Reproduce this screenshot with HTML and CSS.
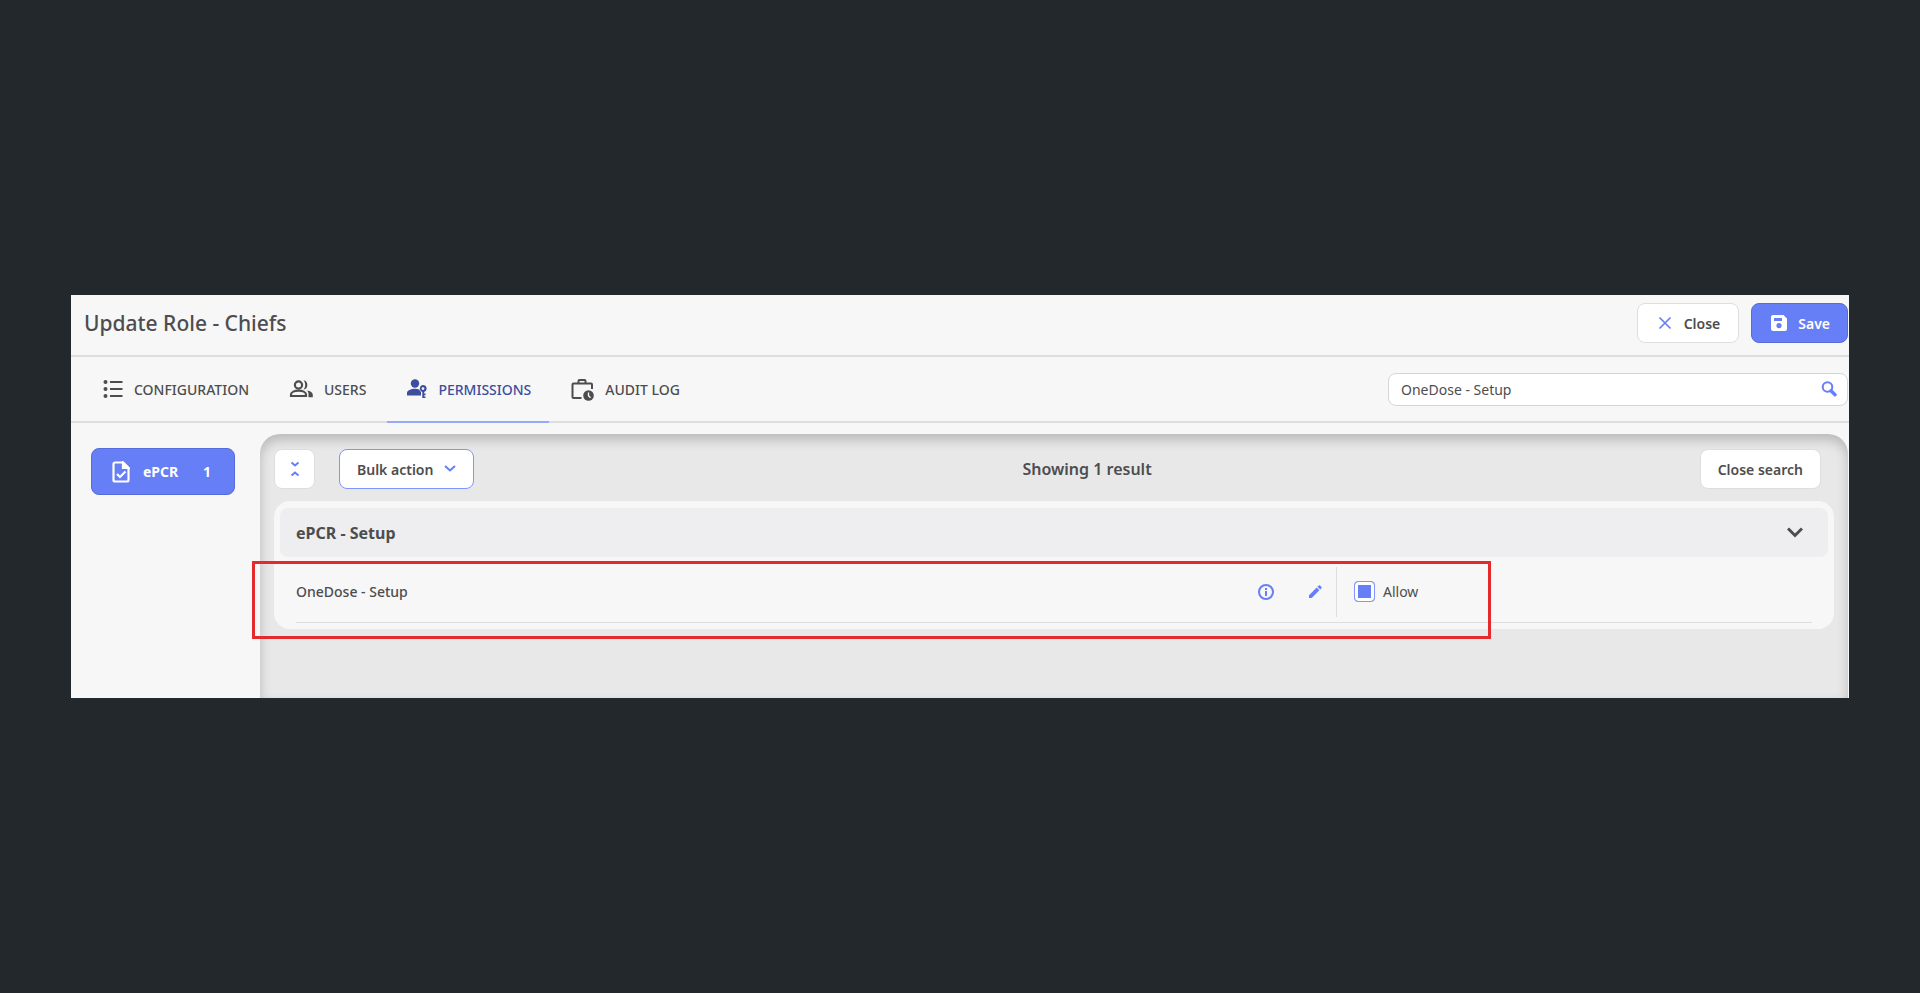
FILE: index.html
```
<!DOCTYPE html>
<html lang="en">

<head>
    <meta charset="UTF-8">
    <meta name="viewport" content="width=device-width, initial-scale=1.0">
    <title>Update Role - Chiefs</title>
    <link rel="stylesheet" href="styles.css">
</head>

<body>
    <div class="window">
        <!-- Title bar -->
        <header class="title-bar">
            <h1>Update Role - Chiefs</h1>
            <div class="title-actions">
                <button type="button" class="btn btn-close">
                    <svg width="14" height="14" viewBox="0 0 14 14" fill="none" stroke="#667ef6" stroke-width="1.700"><path d="M1.500 1.500l11 11M12.500 1.500l-11 11" /></svg>
                    Close
                </button>
                <button type="button" class="btn btn-primary">
                    <svg width="18" height="18" viewBox="0 0 18 18" fill="#fff"><path fill-rule="evenodd" d="M3 1h10.500L17 4.500V15a2 2 0 0 1-2 2H3a2 2 0 0 1-2-2V3a2 2 0 0 1 2-2zM4 4v3h8V4zM9 9a2.600 2.600 0 1 0 0 5.200A2.600 2.600 0 0 0 9 9z" /></svg>
                    Save
                </button>
            </div>
        </header>

        <!-- Tabs and search -->
        <div class="tab-bar">
            <nav class="tabs">
                <a href="#configuration" class="tab">
                    <svg width="20" height="20" viewBox="0 0 20 20" fill="#4d4d4f"><circle cx="2.500" cy="3" r="2" /><circle cx="2.500" cy="10" r="2" /><circle cx="2.500" cy="17" r="2" /><path d="M7 2h12.500v2H7zM7 9h12.500v2H7zM7 16h12.500v2H7z" /></svg>
                    CONFIGURATION
                </a>
                <a href="#users" class="tab">
                    <svg width="24" height="20" viewBox="0 0 24 20" fill="none" stroke="#4d4d4f" stroke-width="2.200"><circle cx="9.500" cy="6" r="3.600" /><path d="M2 17v-1.500c0-2.500 3.700-3.800 7.500-3.800s7.500 1.300 7.500 3.800V17z" /><path d="M14.500 1.300a4.800 4.800 0 0 1 0 9.400c2.300-2.700 2.300-6.700 0-9.400zM18 11.600c3.500.6 5.800 2.100 5.800 4.400v2.200h-4.300v-2.700c0-1.500-.5-2.800-1.500-3.900z" fill="#4d4d4f" stroke="none" /></svg>
                    USERS
                </a>
                <a href="#permissions" class="tab active">
                    <svg width="21" height="20" viewBox="0 0 21 20" fill="#3d4e9e"><circle cx="9" cy="4.500" r="4.200" /><path d="M1 16.500V14c0-2.600 4-4.200 8-4.200 1.600 0 3 .2 4.300.6.300 1.200.9 2 1.700 2.700v3.400z" /><path fill-rule="evenodd" d="M17 6a3.600 3.600 0 0 1 1.200 7v1.500h1.300v1.700h-1.300v1.200h1.300V19h-3.200v-6A3.600 3.600 0 0 1 17 6zm0 2.200a1.400 1.400 0 1 0 0 2.800 1.400 1.400 0 0 0 0-2.800z" /></svg>
                    PERMISSIONS
                </a>
                <a href="#audit-log" class="tab">
                    <svg width="23" height="23" viewBox="0 0 23 23" fill="none" stroke="#4d4d4f" stroke-width="2"><path d="M10.500 20H2.500A1 1 0 0 1 1.500 19V6.500a1 1 0 0 1 1-1h17.500a1 1 0 0 1 1 1V11M7.500 5.500V3a1 1 0 0 1 1-1h5a1 1 0 0 1 1 1v2.500" /><circle cx="17.500" cy="17.500" r="5.300" fill="#4d4d4f" stroke="none" /><path d="M17.500 14.500v3.200l2 2" stroke="#fff" stroke-width="1.300" /></svg>
                    AUDIT LOG
                </a>
            </nav>
            <div class="search">
                <input type="text" aria-label="Search permissions" value="OneDose - Setup">
                <svg width="16" height="16" viewBox="0 0 16 16" fill="none" stroke="#667ef6"><circle cx="6.500" cy="6" r="4.800" stroke-width="2" /><path d="M10 9.700l4 4" stroke-width="3.400" stroke-linecap="round" /></svg>
            </div>
        </div>

        <div class="body">
            <!-- Modules -->
            <aside class="sidebar">
                <button type="button" class="module">
                    <svg width="18" height="22" viewBox="0 0 18 22" fill="none" stroke="#fff" stroke-width="2.200"><path d="M11 1.500H3A1.500 1.500 0 0 0 1.500 3v16A1.500 1.500 0 0 0 3 20.500h12a1.500 1.500 0 0 0 1.500-1.500V7z" /><path d="M11 1.500V7h5.500z" fill="#fff" /><path d="M5 13l3 3 5.500-5.500" /></svg>
                    <span>ePCR</span>
                    <span class="count">1</span>
                </button>
            </aside>

            <main class="content">
                <div class="toolbar">
                    <button type="button" class="btn btn-collapse" aria-label="Collapse all">
                        <svg width="10" height="16" viewBox="0 0 10 16" fill="none" stroke="#667ef6" stroke-width="2"><path d="M1.500 1.500L5 4.500l3.500-3M1.500 14.500L5 11.500l3.500 3" /></svg>
                    </button>
                    <button type="button" class="btn btn-bulk">
                        Bulk action
                        <svg width="12" height="8" viewBox="0 0 12 8" fill="none" stroke="#667ef6" stroke-width="2"><path d="M1 1l5 4.500L11 1" /></svg>
                    </button>
                    <p class="result-count">Showing 1 result</p>
                    <button type="button" class="btn btn-search">Close search</button>
                </div>

                <section class="card">
                    <button type="button" class="group-header">
                        ePCR - Setup
                        <svg width="16" height="11" viewBox="0 0 16 11" fill="none" stroke="#4d4d4f" stroke-width="3"><path d="M1 1.500l7 7 7-7" /></svg>
                    </button>
                    <div class="permission">
                        <div class="permission-name">
                            <span>OneDose - Setup</span>
                            <div class="permission-tools">
                                <button type="button" class="icon-btn" aria-label="Info">
                                    <svg width="16" height="16" viewBox="0 0 16 16" fill="none" stroke="#667ef6"><circle cx="8" cy="8" r="7" stroke-width="2" /><path d="M8 7v5M8 4v2" stroke-width="2" /></svg>
                                </button>
                                <button type="button" class="icon-btn" aria-label="Edit">
                                    <svg width="14" height="14" viewBox="0 0 14 14" fill="#667ef6"><path d="M1 10.300L8.700 2.600l2.700 2.700L3.700 13H1zM9.500 1.800L10.800.6a1 1 0 0 1 1.300 0l1.300 1.300a1 1 0 0 1 0 1.300l-1.200 1.300z" /></svg>
                                </button>
                            </div>
                        </div>
                        <label class="allow">
                            <input type="checkbox" checked>
                            Allow
                        </label>
                        <div class="highlight"></div>
                    </div>
                </section>
            </main>
        </div>
    </div>
</body>

</html>
```
FILE: styles.css
```
* {
    box-sizing: border-box;
}

body {
    display: flex;
    align-items: center;
    min-height: 100vh;
    margin: 0;
    padding: 0 71px;
    background-color: #23282c;
    color: #4d4d4f;
    font-family: "Noto Sans", "Open Sans", sans-serif;
    font-size: 14px;
}

button,
input {
    color: inherit;
    font: inherit;
}

button {
    cursor: pointer;
}

svg {
    display: block;
    flex: none;
}

.window {
    flex: 1;
    background-color: #f7f7f7;
}

/* Title bar */
.title-bar {
    display: flex;
    align-items: center;
    justify-content: space-between;
    height: 62px;
    padding: 0 1px 4px 13px;
    border-bottom: 2px solid #dedede;
}

.title-bar h1 {
    margin: 0;
    font-size: 21px;
    font-weight: 500;
}

.title-actions {
    display: flex;
    gap: 12px;
}

.btn {
    display: flex;
    align-items: center;
    height: 40px;
    padding: 0 17px;
    border: 1px solid #dedede;
    border-radius: 8px;
    background-color: #fff;
    font-weight: 600;
}

.btn-close {
    gap: 12px;
    padding: 0 18px 0 20px;
}

.btn-primary {
    gap: 10px;
    padding: 0 17px 0 18px;
    border-color: #566cdc;
    background-color: #667ef6;
    color: #fff;
}

/* Tabs */
.tab-bar {
    display: flex;
    align-items: center;
    justify-content: space-between;
    height: 66px;
    padding: 0 1px 0 13px;
    border-bottom: 2px solid #dedede;
}

.tabs {
    display: flex;
    align-self: stretch;
    gap: 3px;
    margin-bottom: -2px;
}

.tab {
    display: flex;
    align-items: center;
    gap: 11px;
    padding: 0 18px 0 19px;
    border-bottom: 2px solid transparent;
    color: #4d4d4f;
    font-weight: 500;
    text-decoration: none;
}

.tab.active {
    border-bottom-color: #98a8fa;
    color: #3d4e9e;
}

.search {
    display: flex;
    align-items: center;
    width: 460px;
    height: 33px;
    padding-right: 10px;
    border: 1px solid #d6d6d6;
    border-radius: 8px;
    background-color: #fff;
}

.search input {
    flex: 1;
    padding: 0 12px;
    border: none;
    outline: none;
    background: none;
}

/* Body */
.body {
    display: flex;
    height: 275px;
    padding: 11px 1px 0 20px;
}

.sidebar {
    width: 169px;
    padding-top: 14px;
}

.module {
    display: flex;
    align-items: center;
    width: 144px;
    height: 47px;
    padding: 0 23px 0 20px;
    border: 1px solid #566cdc;
    border-radius: 8px;
    background-color: #667ef6;
    color: #fff;
    font-weight: 700;
}

.module svg {
    margin-right: 13px;
}

.module .count {
    margin-left: auto;
}

.content {
    flex: 1;
    padding: 15px 14px 0;
    border-radius: 20px 20px 0 0;
    background-color: #e8e8e8;
    box-shadow: inset 0 6px 12px rgba(0, 0, 0, 0.2);
}

.toolbar {
    display: flex;
    align-items: center;
    margin-bottom: 12px;
    padding-right: 13px;
}

.btn-collapse {
    justify-content: center;
    width: 41px;
    margin-right: 24px;
    padding: 0;
}

.btn-bulk {
    gap: 11px;
    border-color: #8194f9;
}

.result-count {
    flex: 1;
    margin: 0;
    font-size: 16px;
    font-weight: 600;
    text-align: center;
}

/* Permission group */
.card {
    padding: 7px 6px 6px;
    border-radius: 16px;
    background-color: #f7f7f7;
}

.group-header {
    display: flex;
    align-items: center;
    justify-content: space-between;
    width: 100%;
    height: 49px;
    padding: 0 25px 0 16px;
    border: none;
    border-radius: 8px;
    background-color: #eeeef0;
    font-size: 16px;
    font-weight: 700;
}

.permission {
    position: relative;
    display: flex;
    align-items: center;
    height: 66px;
    margin: 0 16px;
    padding-top: 4px;
    border-bottom: 1px solid #dedede;
    font-weight: 500;
}

.permission-name {
    display: flex;
    flex: 1;
    align-items: center;
    justify-content: space-between;
    height: 50px;
    padding-right: 14px;
    border-right: 1px solid #dedede;
}

.permission-tools {
    display: flex;
    gap: 34px;
}

.icon-btn {
    display: flex;
    align-items: center;
    padding: 0;
    border: none;
    background: none;
}

.allow {
    display: flex;
    align-items: center;
    gap: 8px;
    width: 475px;
    padding-left: 17px;
    font-weight: 400;
}

.allow input {
    width: 21px;
    height: 21px;
    margin: 0;
    appearance: none;
    border: 1px solid #8194f9;
    border-radius: 4px;
    background-color: #fff;
}

.allow input:checked {
    background-color: #667ef6;
    box-shadow: inset 0 0 0 3px #fff;
}

/* Red frame around the permission row */
.highlight {
    position: absolute;
    top: 4px;
    right: 321px;
    bottom: -17px;
    left: -44px;
    border: 3px solid #e42a2a;
    pointer-events: none;
}
```
